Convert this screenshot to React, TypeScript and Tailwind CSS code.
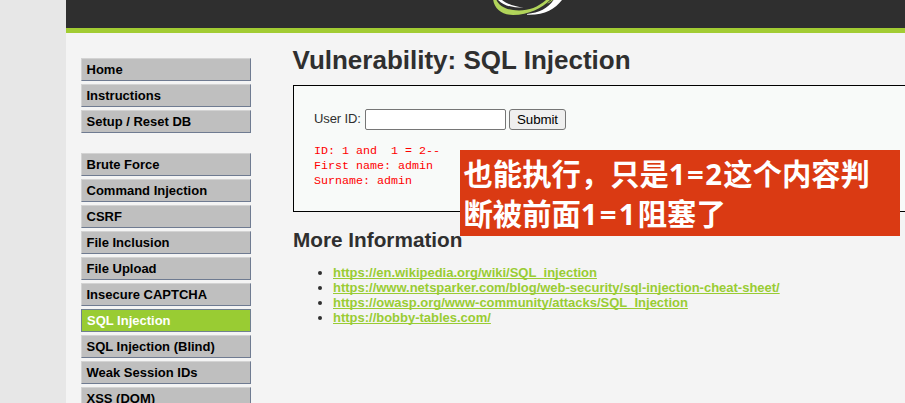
const setupItems = ["Home", "Instructions", "Setup / Reset DB"];
const vulnItems = [
  "Brute Force",
  "Command Injection",
  "CSRF",
  "File Inclusion",
  "File Upload",
  "Insecure CAPTCHA",
  "SQL Injection",
  "SQL Injection (Blind)",
  "Weak Session IDs",
  "XSS (DOM)",
];
const links = [
  { url: "https://en.wikipedia.org/wiki/SQL_injection", width: "w-[264px]" },
  { url: "https://www.netsparker.com/blog/web-security/sql-injection-cheat-sheet/", width: "w-[447px]" },
  { url: "https://owasp.org/www-community/attacks/SQL_Injection", width: "w-[355px]" },
  { url: "https://bobby-tables.com/", width: "w-[158px]" },
];

function Logo() {
  return (
    <svg className="ml-[424px] block" width="80" height="20" viewBox="490 0 80 20">
      <path d="M493.2 0 C494.5 9 502 15 513 15 C529 15 542 8 550 0 L546 0 C538 7 529 10.5 519 10.5 C507 10.5 499.5 6.5 496.5 0 Z" fill="#b1d45a" />
      <path d="M498 0 C504 6 512 7.6 523.5 7.8 C515 6.5 507 4 502 0 Z" fill="#fff" />
      <path d="M549 3 L553 0 L551.5 0 L547 3.4 Z" fill="#b1d45a" />
      <path d="M527 14.8 C544 15.5 555 9 562 0 L553.5 0 C548 8.5 539 12.5 527 14 Z" fill="#fff" />
    </svg>
  );
}

function Menu({ items }: { items: string[] }) {
  return (
    <ul className="flex flex-col gap-[3px]">
      {items.map((item) => {
        const active = item === "SQL Injection";
        return (
          <li
            key={item}
            className={
              active
                ? "h-[23px] border border-[#708090] bg-[#99cc33] pl-[5px] text-white"
                : "h-[23px] border border-t-[#d3d3d3] border-l-[#d3d3d3] border-r-[#6f7b91] border-b-[#6f7b91] bg-[#bfbfbf] pl-[4.5px] text-black"
            }
          >
            <span className="block text-[13px] leading-[21px] font-bold whitespace-nowrap">{item}</span>
          </li>
        );
      })}
    </ul>
  );
}

export default function App() {
  return (
    <div className="relative h-[403px] w-[905px] overflow-hidden bg-[#e7e7e7] pl-[66px] font-['Liberation_Sans',Arial,sans-serif] text-[13px] text-[#2f2f2f]">
      <div className="h-[403px] bg-[#f4f4f4]">
        <header className="h-[33px] overflow-hidden border-b-[5px] border-[#a2cc33] bg-[#2f2f2f]">
          <Logo />
        </header>
        <div className="flex pl-[15px]">
          <nav className="flex w-[170px] shrink-0 flex-col gap-[20px] pt-[25px]">
            <Menu items={setupItems} />
            <Menu items={vulnItems} />
          </nav>
          <main className="ml-[42px] w-[640px] shrink-0 pt-[12px]">
            <h1 className="-ml-[0.5px] h-[40px] text-[26px] leading-[30px] font-bold">Vulnerability: SQL Injection</h1>
            <section className="h-[127px] border border-black bg-[#f8faf9] pt-[23px] pl-[20px]">
              <form className="flex h-[21px] items-center" onSubmit={(e) => e.preventDefault()}>
                <label htmlFor="uid" className="w-[51px] pb-[2px] tracking-[-0.1px] whitespace-nowrap">User ID:</label>
                <input id="uid" className="h-[21px] w-[141px] rounded-[2px] border border-[#767676] bg-white px-1" />
                <button className="ml-[3px] h-[21px] w-[57px] rounded-[3px] border border-[#767676] bg-[#efefef] text-[13.33px] leading-[18px] tracking-[-0.1px] text-black">
                  Submit
                </button>
              </form>
              <pre className="mt-[14px] font-['Liberation_Mono',monospace] text-[11.67px] leading-[15px] text-[#ff0000]">
                {"ID: 1 and  1 = 2--\nFirst name: admin\nSurname: admin"}
              </pre>
            </section>
            <h2 className="mt-[16px] h-[37px] text-[20.75px] leading-[24px] font-bold">More Information</h2>
            <ul className="list-disc pl-[40px] leading-[15px]">
              {links.map((link) => (
                <li key={link.url}>
                  <a
                    className={`block font-bold tracking-[-0.01px] whitespace-nowrap text-[#99cc33] underline [text-decoration-skip-ink:none] ${link.width}`}
                    href="#"
                  >
                    {link.url}
                  </a>
                </li>
              ))}
            </ul>
          </main>
        </div>
      </div>
      <div className="absolute top-[150px] left-[460px] h-[86px] w-[440px] bg-[#da3a13] pt-[5px] pl-[3.5px] font-['Open_Sans','Noto_Sans_CJK_SC',sans-serif] text-[29.33px] leading-[39.5px] font-bold whitespace-nowrap text-white">
        <p>也能执行，只是<span className="tracking-[1.4px]">1=2</span>这个内容判</p>
        <p>断被前面<span className="tracking-[2.2px]">1=1</span>阻塞了</p>
      </div>
    </div>
  );
}
